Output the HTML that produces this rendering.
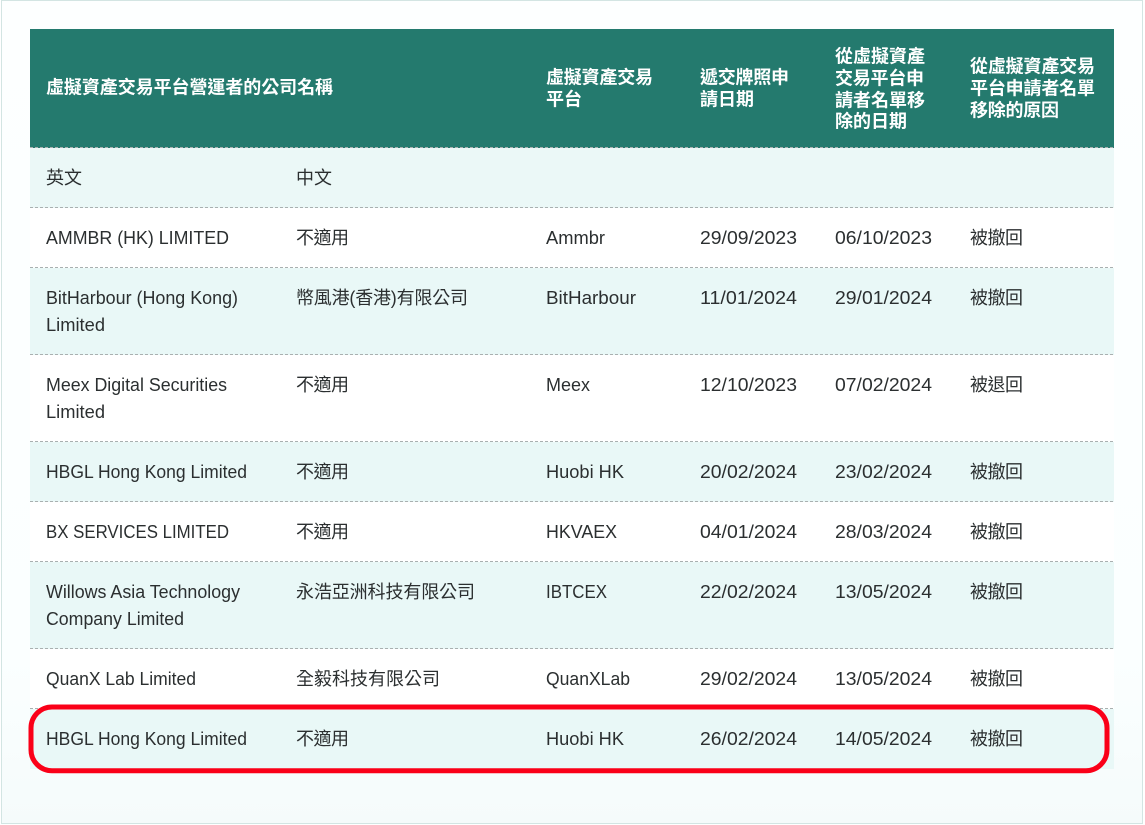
<!DOCTYPE html>
<html lang="zh-Hant"><head><meta charset="utf-8">
<style>
html,body{margin:0;padding:0;width:1145px;height:825px;overflow:hidden;background:#fff}
svg{display:block}
text{font-family:"Liberation Sans","Noto Sans CJK TC",sans-serif;font-size:18px;fill:#2b2f30}
.h{font-weight:700;fill:#fff;font-size:18px}
.c{font-size:18px}
.d{stroke:#a9b0b0;stroke-width:1;stroke-dasharray:3 2;fill:none}
</style></head><body>
<svg width="1145" height="825" viewBox="0 0 1145 825" xmlns="http://www.w3.org/2000/svg">
<defs><linearGradient id="bg" x1="0" y1="0" x2="0" y2="1"><stop offset="0" stop-color="#fdffff"/><stop offset=".8" stop-color="#fbffff"/><stop offset="1" stop-color="#f5fbfb"/></linearGradient></defs>
<rect x="1.5" y=".5" width="1141" height="823" fill="url(#bg)" stroke="#d3e5e3"/>
<rect x="30" y="29" width="1084" height="119" fill="#247a6e"/>
<rect x="30" y="148" width="1084" height="60" fill="#ebf8f7"/>
<rect x="30" y="208" width="1084" height="60" fill="#fff"/>
<rect x="30" y="268" width="1084" height="87" fill="#e9f8f7"/>
<rect x="30" y="355" width="1084" height="87" fill="#fff"/>
<rect x="30" y="442" width="1084" height="60" fill="#e9f8f7"/>
<rect x="30" y="502" width="1084" height="60" fill="#fff"/>
<rect x="30" y="562" width="1084" height="87" fill="#e9f8f7"/>
<rect x="30" y="649" width="1084" height="60" fill="#fff"/>
<rect x="30" y="709" width="1084" height="60" fill="#e9f8f7"/>
<path class="d" d="M30 147.5H1114M30 207.5H1114M30 267.5H1114M30 354.5H1114M30 441.5H1114M30 501.5H1114M30 561.5H1114M30 648.5H1114M30 708.5H1114"/>

<text class="h" x="46" y="93.5" textLength="287">虛擬資產交易平台營運者的公司名稱</text>
<text class="h" x="546" y="83.5" textLength="107">虛擬資產交易</text>
<text class="h" x="546" y="105.5" textLength="36">平台</text>
<text class="h" x="700" y="83.5" textLength="89">遞交牌照申</text>
<text class="h" x="700" y="105.5" textLength="54">請日期</text>
<text class="h" x="835" y="62.5" textLength="90">從虛擬資產</text>
<text class="h" x="835" y="84.5" textLength="89">交易平台申</text>
<text class="h" x="835" y="106.5" textLength="90">請者名單移</text>
<text class="h" x="835" y="127.5" textLength="72">除的日期</text>
<text class="h" x="970" y="72.5" textLength="125">從虛擬資產交易</text>
<text class="h" x="970" y="94.5" textLength="125">平台申請者名單</text>
<text class="h" x="970" y="116.5" textLength="89">移除的原因</text>

<text class="c" x="46" y="184" textLength="36">英文</text>
<text class="c" x="296" y="184" textLength="36">中文</text>

<text x="46" y="244" textLength="183" lengthAdjust="spacingAndGlyphs">AMMBR (HK) LIMITED</text>
<text class="c" x="296" y="244" textLength="53">不適用</text>
<text x="546" y="244" textLength="59" lengthAdjust="spacingAndGlyphs">Ammbr</text>
<text x="700" y="244" textLength="97" lengthAdjust="spacingAndGlyphs">29/09/2023</text>
<text x="835" y="244" textLength="97" lengthAdjust="spacingAndGlyphs">06/10/2023</text>
<text class="c" x="970" y="244" textLength="53">被撤回</text>

<text x="46" y="304" textLength="192" lengthAdjust="spacingAndGlyphs">BitHarbour (Hong Kong)</text>
<text x="46" y="331" textLength="59" lengthAdjust="spacingAndGlyphs">Limited</text>
<text class="c" x="296" y="304" textLength="172">幣風港(香港)有限公司</text>
<text x="546" y="304" textLength="90" lengthAdjust="spacingAndGlyphs">BitHarbour</text>
<text x="700" y="304" textLength="97" lengthAdjust="spacingAndGlyphs">11/01/2024</text>
<text x="835" y="304" textLength="97" lengthAdjust="spacingAndGlyphs">29/01/2024</text>
<text class="c" x="970" y="304" textLength="53">被撤回</text>

<text x="46" y="391" textLength="181" lengthAdjust="spacingAndGlyphs">Meex Digital Securities</text>
<text x="46" y="418" textLength="59" lengthAdjust="spacingAndGlyphs">Limited</text>
<text class="c" x="296" y="391" textLength="53">不適用</text>
<text x="546" y="391" textLength="44" lengthAdjust="spacingAndGlyphs">Meex</text>
<text x="700" y="391" textLength="97" lengthAdjust="spacingAndGlyphs">12/10/2023</text>
<text x="835" y="391" textLength="97" lengthAdjust="spacingAndGlyphs">07/02/2024</text>
<text class="c" x="970" y="391" textLength="53">被退回</text>

<text x="46" y="478" textLength="201" lengthAdjust="spacingAndGlyphs">HBGL Hong Kong Limited</text>
<text class="c" x="296" y="478" textLength="53">不適用</text>
<text x="546" y="478" textLength="78" lengthAdjust="spacingAndGlyphs">Huobi HK</text>
<text x="700" y="478" textLength="97" lengthAdjust="spacingAndGlyphs">20/02/2024</text>
<text x="835" y="478" textLength="97" lengthAdjust="spacingAndGlyphs">23/02/2024</text>
<text class="c" x="970" y="478" textLength="53">被撤回</text>

<text x="46" y="538" textLength="183" lengthAdjust="spacingAndGlyphs">BX SERVICES LIMITED</text>
<text class="c" x="296" y="538" textLength="53">不適用</text>
<text x="546" y="538" textLength="71" lengthAdjust="spacingAndGlyphs">HKVAEX</text>
<text x="700" y="538" textLength="97" lengthAdjust="spacingAndGlyphs">04/01/2024</text>
<text x="835" y="538" textLength="97" lengthAdjust="spacingAndGlyphs">28/03/2024</text>
<text class="c" x="970" y="538" textLength="53">被撤回</text>

<text x="46" y="598" textLength="194" lengthAdjust="spacingAndGlyphs">Willows Asia Technology</text>
<text x="46" y="625" textLength="138" lengthAdjust="spacingAndGlyphs">Company Limited</text>
<text class="c" x="296" y="598" textLength="179">永浩亞洲科技有限公司</text>
<text x="546" y="598" textLength="61" lengthAdjust="spacingAndGlyphs">IBTCEX</text>
<text x="700" y="598" textLength="97" lengthAdjust="spacingAndGlyphs">22/02/2024</text>
<text x="835" y="598" textLength="97" lengthAdjust="spacingAndGlyphs">13/05/2024</text>
<text class="c" x="970" y="598" textLength="53">被撤回</text>

<text x="46" y="685" textLength="150" lengthAdjust="spacingAndGlyphs">QuanX Lab Limited</text>
<text class="c" x="296" y="685" textLength="144">全毅科技有限公司</text>
<text x="546" y="685" textLength="84" lengthAdjust="spacingAndGlyphs">QuanXLab</text>
<text x="700" y="685" textLength="97" lengthAdjust="spacingAndGlyphs">29/02/2024</text>
<text x="835" y="685" textLength="97" lengthAdjust="spacingAndGlyphs">13/05/2024</text>
<text class="c" x="970" y="685" textLength="53">被撤回</text>

<text x="46" y="745" textLength="201" lengthAdjust="spacingAndGlyphs">HBGL Hong Kong Limited</text>
<text class="c" x="296" y="745" textLength="53">不適用</text>
<text x="546" y="745" textLength="78" lengthAdjust="spacingAndGlyphs">Huobi HK</text>
<text x="700" y="745" textLength="97" lengthAdjust="spacingAndGlyphs">26/02/2024</text>
<text x="835" y="745" textLength="97" lengthAdjust="spacingAndGlyphs">14/05/2024</text>
<text class="c" x="970" y="745" textLength="53">被撤回</text>

<rect x="31" y="707" width="1076" height="63.7" rx="21" ry="21" fill="none" stroke="#fa0018" stroke-width="5"/>
</svg>
</body></html>
